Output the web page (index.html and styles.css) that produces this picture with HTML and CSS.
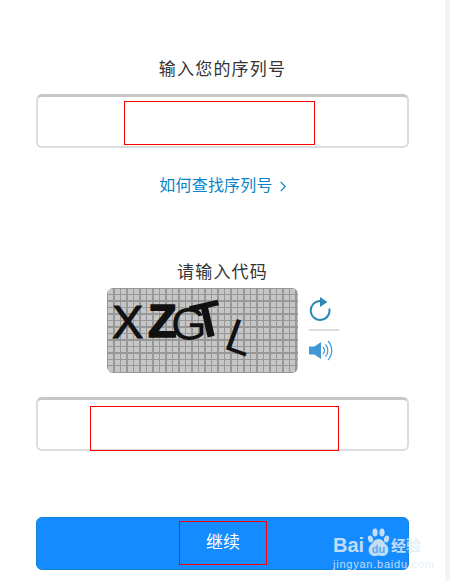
FILE: index.html
```html
<!DOCTYPE html>
<html lang="zh-CN">
<head>
  <meta charset="UTF-8" />
  <title>输入您的序列号</title>
  <link rel="stylesheet" href="styles.css">
</head>
<body>

  <div class="page">
    <h2 class="title">输入您的序列号</h2>
    <div class="field">
      <div class="mask mask-serial"></div>
    </div>

    <a class="help-link" href="#">如何查找序列号
      <svg class="chevron" width="6" height="11" viewBox="0 0 6 11"><path d="M.7 .8l4.500 4.700-4.500 4.700" fill="none" stroke="#0a84c8" stroke-width="1.200"/></svg>
    </a>

    <h2 class="title code-title">请输入代码</h2>
    <div class="captcha-row">
      <div class="captcha">
        <svg width="191" height="85" viewBox="0 0 191 85">
          <text class="glyph" x="5" y="50" font-size="47" stroke="#111" stroke-width="1">X</text>
          <text class="glyph heavy" x="41" y="49" font-size="47" stroke="#111" stroke-width="1.500">Z</text>
          <text class="glyph" x="64" y="52" font-size="46">G</text>
          <text class="glyph heavy" x="85" y="49" font-size="50" transform="rotate(-13 100 32)">T</text>
          <text class="glyph" x="115" y="61" font-size="47" transform="rotate(20 118 61)">L</text>
        </svg>
      </div>
      <div class="captcha-tools">
        <svg class="refresh" width="22" height="24" viewBox="0 0 22 24">
          <path d="M11 4.100a9.400 9.400 0 1 0 9.300 7.400" fill="none" stroke="#2f86b5" stroke-width="2"/>
          <path d="M11 0l7.500 5-7.500 5z" fill="#2f86b5"/>
        </svg>
        <div class="tool-divider"></div>
        <svg class="speaker" width="24" height="21" viewBox="0 0 24 21">
          <path d="M0 6.500h5.500L12 2v17l-6.500-4.500H0z" fill="#3f97d6"/>
          <path d="M14 7a5 5 0 0 1 0 7M16.500 4.500a9 9 0 0 1 0 12M19 1a14 14 0 0 1 0 19" fill="none" stroke="#3f97d6" stroke-width="1.200"/>
        </svg>
      </div>
    </div>
    <div class="field field-code">
      <div class="mask mask-code"></div>
    </div>

    <button class="continue-btn" type="button"><span class="btn-label">继续</span></button>
  </div>

  <!-- Watermark -->
  <div class="watermark">
    <div class="wm-top">
      <span class="wm-bai">Bai</span>
      <svg class="wm-paw" width="23" height="29" viewBox="0 0 23 29">
        <ellipse cx="3.500" cy="11" rx="2.500" ry="3.500" transform="rotate(-15 3.500 11)"/>
        <ellipse cx="8" cy="4.500" rx="2.600" ry="4"/>
        <ellipse cx="15" cy="4.500" rx="2.600" ry="4"/>
        <ellipse cx="19.500" cy="11" rx="2.500" ry="3.500" transform="rotate(15 19.500 11)"/>
        <path d="M11.500 11c4 0 5 3 8 6 3.500 4 2 11-4 11-1.500 0-2.500-.5-4-.5s-2.500.5-4 .5c-6 0-7.500-7-4-11 3-3 4-6 8-6z"/>
        <text class="wm-du" x="11.500" y="25" font-size="11" text-anchor="middle">du</text>
      </svg>
      <span class="wm-cn">经验</span>
    </div>
    <div class="wm-url">jingyan.baidu.com</div>
  </div>

</body>
</html>
```

FILE: styles.css
```css
/* Basic reset and body styling */
html, body {
  height: 100%;
}
body {
  margin: 0;
  background-color: #f4f4f4;
  font-family: "Liberation Sans", "Noto Sans CJK SC", sans-serif;
  overflow: hidden;
}
.page {
  position: relative;
  width: 373px;
  height: 581px;
  padding: 0 36px;
  background-color: #fff;
}

/* Headings */
.title {
  margin: 0;
  padding-top: 57px;
  font-size: 17px;
  line-height: 25px;
  font-weight: normal;
  letter-spacing: 1.200px;
  text-align: center;
  color: #333;
}
.code-title {
  padding-top: 64px;
  line-height: 24px;
}

/* Input fields */
.field {
  display: flex;
  height: 54px;
  margin-top: 12px;
  box-sizing: border-box;
  background: #fff;
  border: 2px solid #dcdcdc;
  border-top: 3px solid #c6c6c6;
  border-radius: 6px;
}
.field-code {
  margin-top: 24px;
}
.mask {
  border: 1px solid #f00;
  box-sizing: border-box;
}
.mask-serial {
  width: 191px;
  height: 44px;
  margin: 4px 0 0 86px;
}
.mask-code {
  width: 249px;
  height: 45px;
  margin: 6px 0 0 52px;
}

/* Help link */
.help-link {
  display: flex;
  justify-content: center;
  align-items: center;
  gap: 7px;
  margin-top: 27px;
  font-size: 16px;
  line-height: 22px;
  letter-spacing: 0.200px;
  color: #0a84c8;
  text-decoration: none;
}

/* Captcha */
.captcha-row {
  display: flex;
  margin: 3px 0 0 71px;
}
.captcha {
  width: 191px;
  height: 85px;
  border-radius: 6px;
  background-color: #c6c6c6;
  background-image:
    repeating-linear-gradient(90deg, #979797 0 1.200px, transparent 1.200px 6.500px),
    repeating-linear-gradient(0deg, #979797 0 1.200px, transparent 1.200px 6.500px);
  overflow: hidden;
}
.glyph {
  font-family: "Liberation Sans", sans-serif;
  fill: #111;
}
.heavy {
  font-weight: bold;
}
.captcha-tools {
  display: flex;
  flex-direction: column;
  margin-left: 11px;
  padding-top: 9px;
  width: 30px;
}
.tool-divider {
  width: 30px;
  height: 2px;
  margin: 8px 0 9px;
  background-color: #ddd;
}

/* Continue button */
.continue-btn {
  display: flex;
  width: 373px;
  height: 53px;
  margin-top: 66px;
  padding: 3px 0 0 142px;
  background-color: #148cff;
  border: 1px solid #0f86dc;
  border-radius: 6px;
  box-sizing: border-box;
  font-family: inherit;
}
.btn-label {
  display: block;
  width: 88px;
  height: 44px;
  border: 1px solid #f00;
  box-sizing: border-box;
  font-size: 17px;
  line-height: 42px;
  color: #fff;
}

/* Baidu watermark, sits over the button corner */
.watermark {
  position: absolute;
  left: 333px;
  top: 528px;
  width: 92px;
}
.wm-top {
  display: flex;
  align-items: flex-end;
  height: 29px;
}
.wm-bai {
  width: 34px;
  font-weight: bold;
  font-size: 20px;
  line-height: 23px;
  color: rgba(225, 235, 245, 0.85);
}
.wm-paw {
  fill: rgba(225, 235, 245, 0.85);
}
.wm-du {
  font-family: "Liberation Sans", sans-serif;
  font-weight: bold;
  fill: #5aa9ee;
}
.wm-cn {
  margin-left: 1px;
  font-size: 15px;
  font-weight: bold;
  line-height: 23px;
  color: rgba(225, 235, 245, 0.85);
}
.wm-url {
  margin-top: 1px;
  font-size: 11px;
  line-height: 12px;
  letter-spacing: 0.770px;
  white-space: nowrap;
  color: rgba(225, 235, 245, 0.85);
}
```
